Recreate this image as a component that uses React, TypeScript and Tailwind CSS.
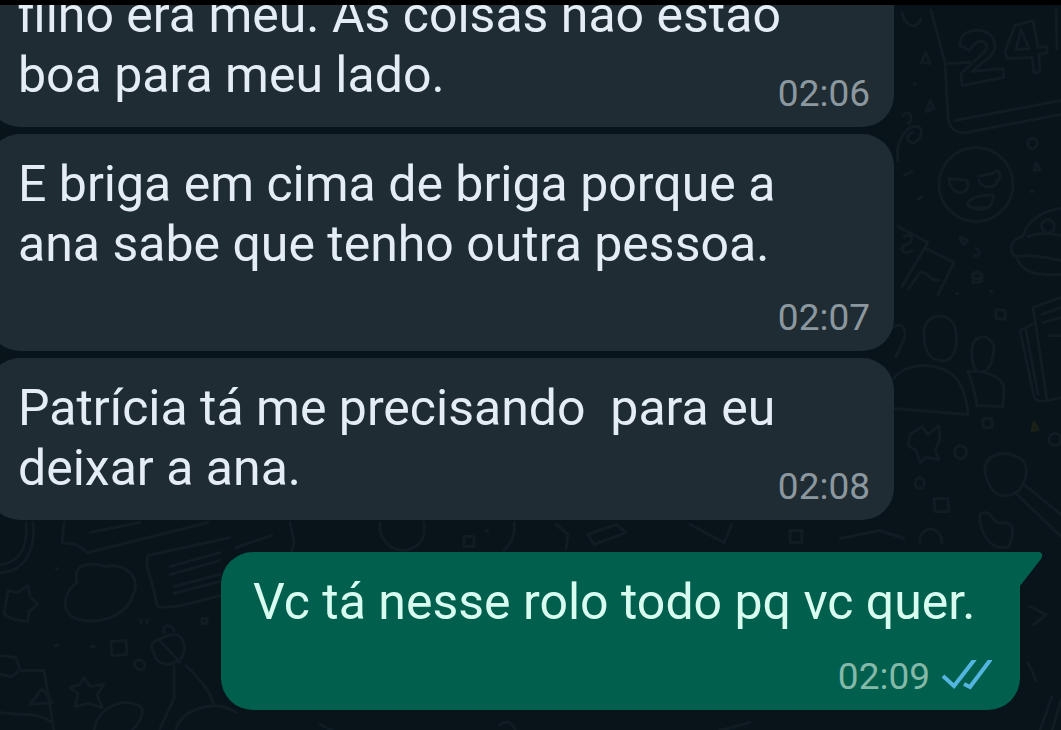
type Message = {
  text: string;
  time: string;
  // leaves a free line under the text for the time
  timeBelow?: boolean;
  outgoing?: boolean;
};

const MESSAGES: Message[] = [
  { text: 'filho era meu. As coisas não estão\nboa para meu lado.', time: '02:06' },
  {
    text: 'E briga em cima de briga porque a\nana sabe que tenho outra pessoa.',
    time: '02:07',
    timeBelow: true,
  },
  { text: 'Patrícia tá me precisando  para eu\ndeixar a ana.', time: '02:08' },
  { text: 'Vc tá nesse rolo todo pq vc quer.', time: '02:09', outgoing: true },
];

const Wallpaper: React.FC = () => (
  <svg
    aria-hidden="true"
    viewBox="0 0 1061 730"
    preserveAspectRatio="xMidYMid slice"
    className="absolute inset-0 size-full"
    fill="none"
    stroke="#101c22"
    strokeWidth="3"
    strokeLinecap="round"
    strokeLinejoin="round"
  >
    {/* calendar */}
    <path d="M931 8l14 52 3 54c1 12 8 17 18 16l95-18M948 61l22-1M955 118l106-20M1056 6l1 40" />
    <path d="M960 43c-1-12 12-18 24-14 12 4 14 18 6 25l-18 15 31-3 1 9-42 8-1-12 22-20c7-7 3-13-4-12-6 1-7 7-10 9zM1015 23l-10 26 2 7 25-1 2 16 6-2-1-17 8-2v-6l-9 1-5-27zM1021 27l-5 20 13-1z" />
    <path d="M902 10c2 12 14 20 19 6M921 60l5-10 4 11zM930 98l4 8-8 3zM914 82l2-1M903 113c6-8 12 4 5 8M898 158c-3-14 6-36 20-34 8 4 0 18-6 16-7-1-5-10 1-10M904 173l8-4M918 197l4-3" />
    {/* emoji face */}
    <circle cx="976" cy="182" r="37" />
    <path d="M949 176l18 2c5 14-12 17-17 4zM978 174l15-3c7-8 10 6 4 7 0 9-16 8-18 0M967 201c8-10 18-7 26-9 2 16-18 20-26 9zM975 205h14" />
    <path d="M1031 136c9-2 7 12 0 10-5-2-4-9 0-10zM1036 160l4 7-6 1zM1031 189h2" />
    {/* card */}
    <path d="M898 224l30 16-26 44M904 234c10-5 10 6 2 8s-3 13 6 6M926 246l28 14-16 32M960 235l8 3-5 4zM976 246c6 3 3 9-2 7M974 276c-4-9 10-9 8 0z" />
    {/* cupcake */}
    <path d="M1061 206c-20 2-35 14-38 28-14 3-15 18-6 20 2 12 14 20 44 18M1042 221c5-8 16-2 11 7-5 6-13 0-11-7zM1017 254c16-2 28 1 44 4M1028 234c12-5 24-3 33-1" />
    {/* people */}
    <path d="M924 330c0-21 30-23 32 0 3 26-10 30-17 28-10-1-15-12-15-28zM972 346c1-15 20-16 22 0-2 20-8 24-15 23-5-2-8-10-7-23z" />
    <path d="M894 406l74 6c-2-22-8-39-26-46-22-7-42 0-48 10M968 369c18-2 36 6 36 18l-1 17-26-1c-2-12-4-22-9-34M893 325c10-8 16 6 9 16l-6 13M909 286l8-12c8-12 12 6 22 4M972 272l8-2 2 9-9 1zM956 291h2M990 289h2M996 307l9 1v9l-9-1z" />
    {/* newspaper */}
    <path d="M1061 295l-28 10 14 93 14-3M1032 322l-12 6 14 66c2 6 8 5 13 4M1026 328l12 64M1042 312l19-7M1043 320l18-5M1049 333h12" />
    {/* flower, lens, small marks */}
    <path d="M910 432l12-8 6 8 11-9 1 14-5 11 4 9-13-2-6 5-4-12-8-5zM983 416h9v9h-9zM957 444c9-4 14 10 4 12-8 0-7-9-4-12zM917 476c8-4 10 9 3 10-5 0-6-6-3-10zM934 496h14l1 13h-14z" />
    <path d="M985 470c-2-20 22-22 31-16 14 4 12 20 4 33-8 8-28 14-35-17zM1015 490l46 44M1024 482l37 30M980 512c12-8 12 12 23 8 14 0 10 14 6 24-16 6-30-12-29-32zM920 540c-2-16 20-20 22 0" />
    <circle cx="1055" cy="437" r="6" />
    <path d="M1034 420l4 7-6 1z" stroke="#1b2119" />
    {/* left side doodles */}
    <path d="M0 562c20-2 28-18 26-42M0 570c24 0 36-22 33-50M64 520l-2 20 14 2 12 8 120-30M90 530l50-10M56 566h1M55 643h3M91 644h3" />
    <path d="M77 580c-6-24 22-18 28-16 24-4 36 14 28 28-6 22-34 30-54 25-18-4-18-26-2-37zM8 588l10 2 10-7 2 11 8 8-9 7-1 10-14-2-10-5z" />
    <path d="M230 535l-82 18c-4 14 4 18 9 50 6 6 40-4 64-10M170 564l50-14M170 572l50-14M174 584l46-12M174 591l46-12M141 617v4M147 617v4" />
    <path d="M111 639l15-1 1 14-15 1zM153 640c14-8 28-14 31 2 4 18-20 26-28 14-4-10-6-14-3-16zM160 638l20 22M164 630c-2-10 8-8 10-2M136 658c8-4 12 8 6 9-6 1-10-6-6-9zM174 664v32l-14 30M186 663c12 12 24 24 28 40M176 726c6-20 40-30 60-16M202 616h5v5h-5z" />
    <path d="M0 653l16 2 4 12-8 7-12-2M22 668h22l10 60M30 702l12-16 10 14zM0 710c24 4 34-2 52 10M84 675l6 9 14-2-7 10 5 13-14-4-13 3 3-13-8-6 10-3zM94 728c4-28 38-34 48-22 2 8-6 18-10 22" />
    {/* between the bubbles and along the bottom */}
    <path d="M236 545l36-12M290 520c2 12 6 20 2 28M380 520c-2 16 10 28 24 28 16-2 22-12 20-28M464 534h10v10h-10zM486 528h2M514 520c2 14-4 22-10 28M556 522l12 10-2 14M588 532l28-10 10 8-32 12zM690 522l34 18 8-18M790 528h12v12h-12zM840 536l40-8 24 8M1030 604l16 8-12 10M1028 660l8 18M1040 728l12-34M1052 728l9-30M320 722l16 8M500 722c8-6 14 0 16 8M720 728l30-8" />
  </svg>
);

const ReadTicks: React.FC = () => (
  <svg
    role="img"
    aria-label="Lida"
    viewBox="0 0 50 34"
    className="h-[34px] w-[50px]"
    fill="none"
    stroke="#53b5e0"
    strokeWidth="4"
  >
    <path d="M1 16l11 10L33 -1" />
    <path d="M22 24l6 3L49 -1" />
  </svg>
);

const Bubble: React.FC<{ message: Message }> = ({ message }) => {
  const { text, time, timeBelow, outgoing } = message;

  if (outgoing) {
    return (
      <li className="relative mt-[25px] mr-[41px] ml-[221px] rounded-4xl rounded-tr-none bg-[#015f4d] pt-5 pr-7 pb-2 pl-8 text-[#d8fdf0]">
        <svg
          aria-hidden="true"
          viewBox="0 0 23 37"
          className="absolute top-0 left-full h-[37px] w-[23px]"
          fill="#015f4d"
        >
          <path d="M-1 0H19q5 1 2 7L0 34v3h-1z" />
        </svg>
        <p className="whitespace-pre-wrap">{text}</p>
        <div className="mt-5 flex items-center justify-end gap-3 text-[37px] leading-[50px] text-[#84b8a8]">
          <time>{time}</time>
          <ReadTicks />
        </div>
      </li>
    );
  }

  return (
    <li className="relative mr-[167px] -ml-3 rounded-4xl bg-[#202c33] pt-5 pr-6 pl-[30px] text-[#e4edf4]">
      <p
        className={
          timeBelow
            ? 'whitespace-pre-wrap pb-[77px]'
            : 'whitespace-pre-wrap pb-[22px]'
        }
      >
        {text}
      </p>
      <time className="absolute right-6 bottom-2 text-[37px] leading-[50px] text-[#8c989f]">
        {time}
      </time>
    </li>
  );
};

const App: React.FC = () => {
  return (
    <div className="flex h-screen flex-col bg-black">
      <main className="relative mt-[5px] flex flex-1 flex-col justify-end overflow-hidden bg-[#08131a] font-['Roboto',sans-serif] text-[50px] leading-[60px]">
        <Wallpaper />
        <ul className="relative flex flex-col gap-[7px] pb-5">
          {MESSAGES.map(message => (
            <Bubble key={message.time} message={message} />
          ))}
        </ul>
      </main>
    </div>
  );
};

export default App;
